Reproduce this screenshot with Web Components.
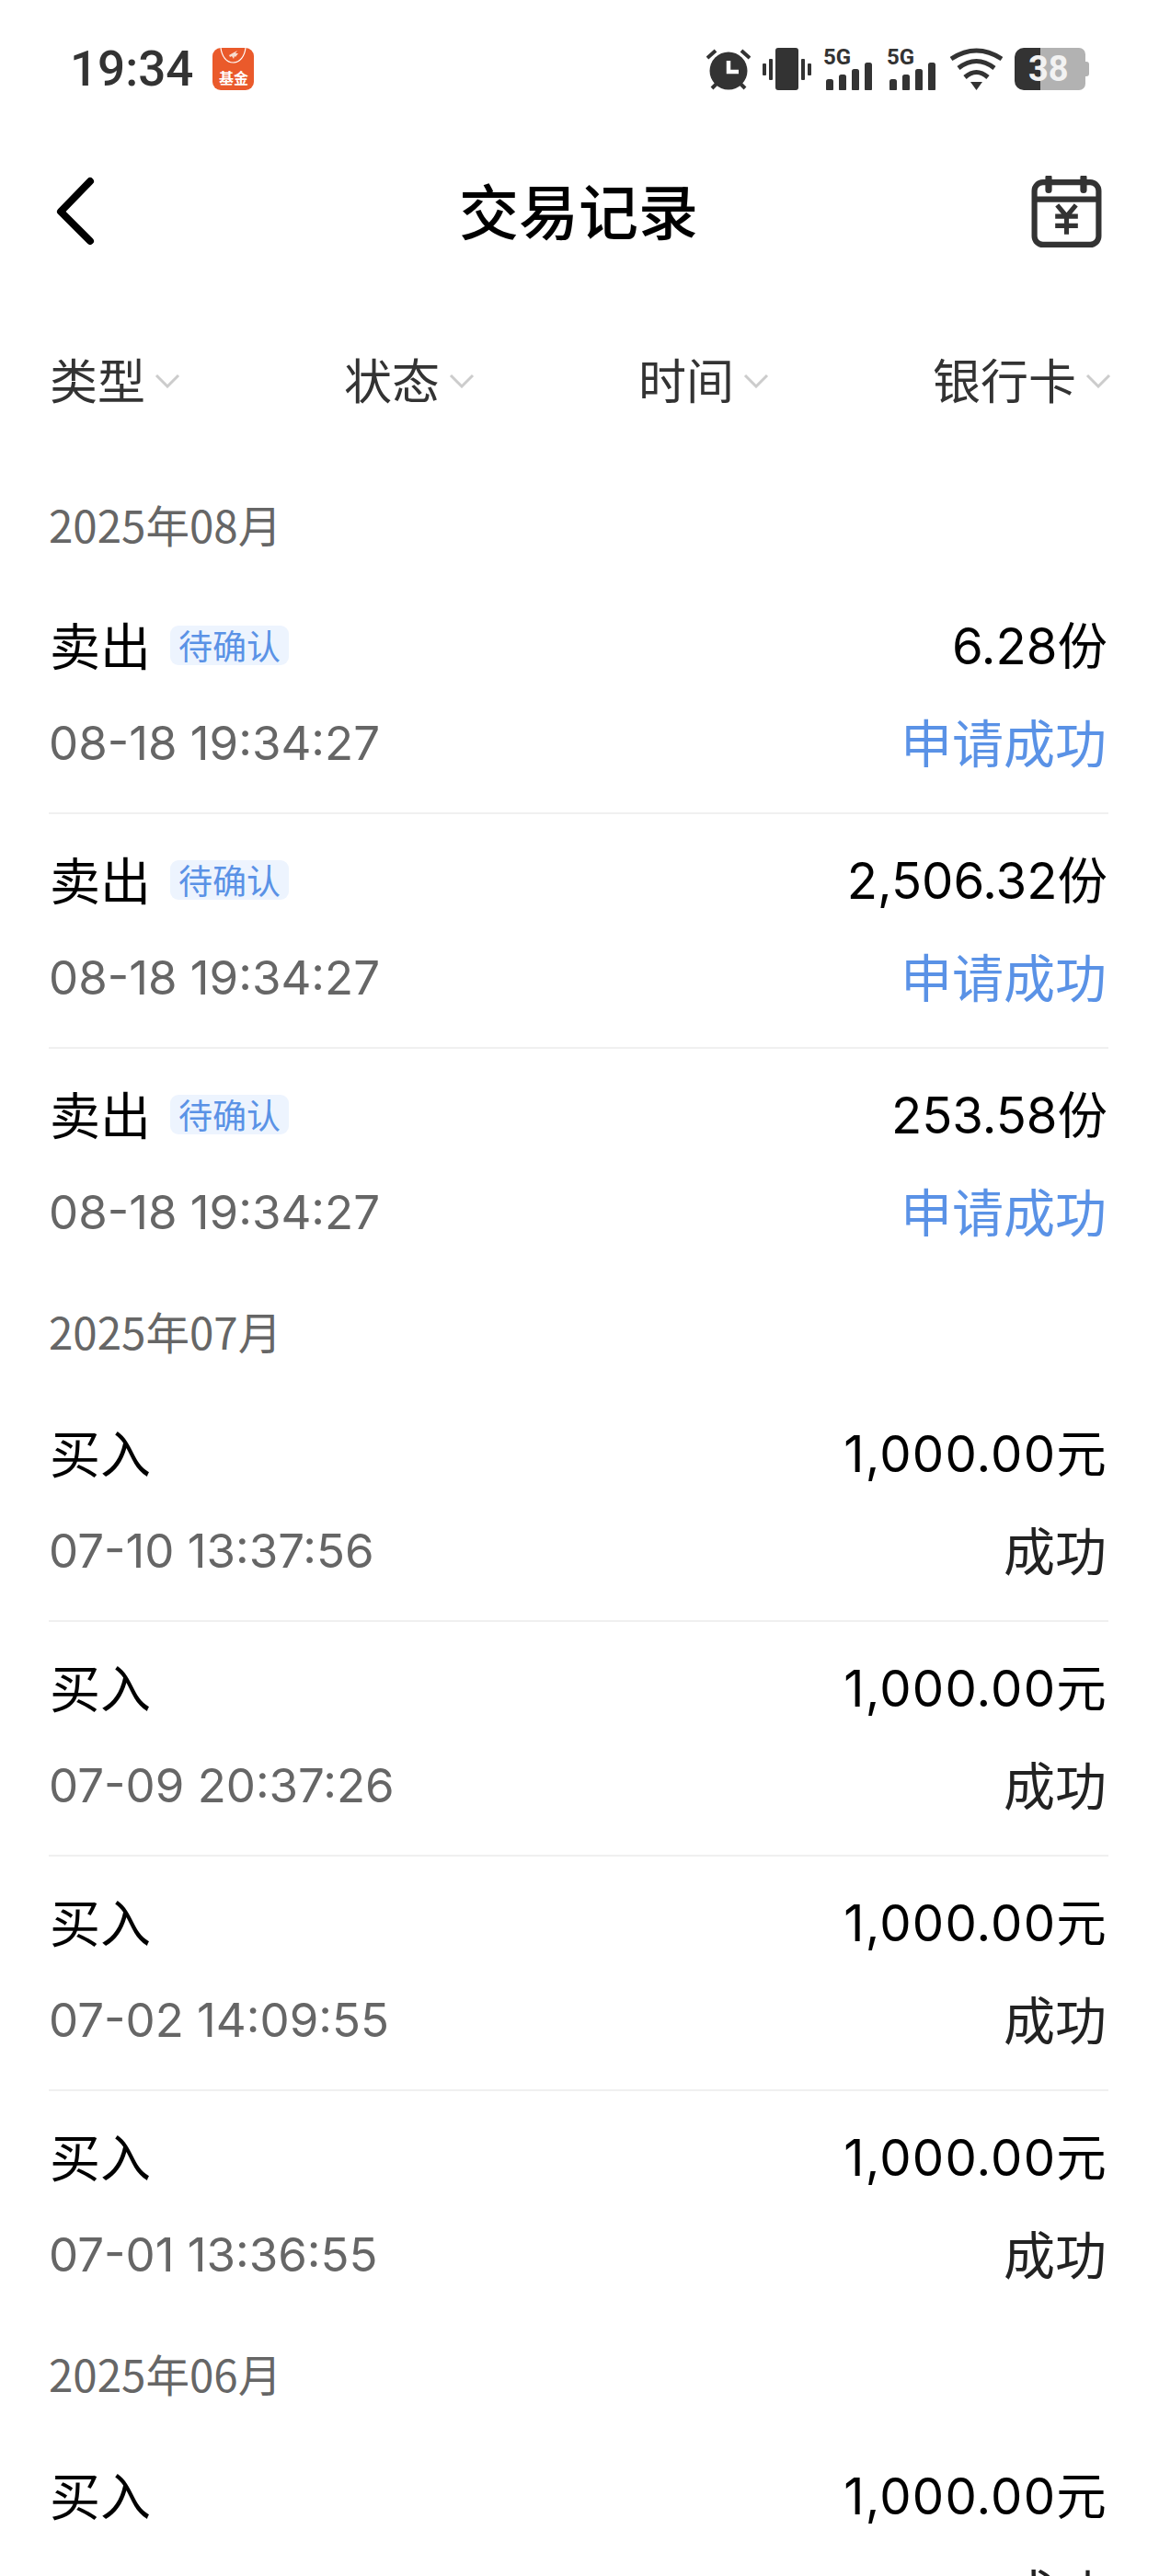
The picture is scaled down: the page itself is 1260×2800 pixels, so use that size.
<!DOCTYPE html>
<html lang="zh">
<head>
<meta charset="utf-8">
<title>交易记录</title>
<style>
html,body{margin:0;padding:0;background:#fff;}
body{font-family:"Noto Sans CJK SC","Noto Sans",sans-serif;height:2800px;overflow:hidden;}
</style>
</head>
<body>
<trade-page></trade-page>
<script>
class StatusBar extends HTMLElement{
    constructor(){
        super();
        this.attachShadow({mode:'open'});
        this.shadowRoot.innerHTML=`
        <style>
        :host{display:flex;align-items:center;justify-content:space-between;height:150px;padding:0 76px 0 76px;box-sizing:border-box;color:#333;}
        .left{display:flex;align-items:center;gap:21px;}
        .time{font:500 53px/60px Roboto,sans-serif;}
        .app{width:45px;height:46px;border-radius:9px;background:#ea5a2b;position:relative;overflow:hidden;color:#fff;}
        .app span{position:absolute;left:0;right:0;bottom:5px;text-align:center;font:700 16px/18px "Noto Sans CJK SC",sans-serif;}
        .app svg{position:absolute;left:0;top:0;}
        .right{display:flex;align-items:center;height:46px;}
        .bat{position:relative;width:81px;height:46px;}
        .bat b{position:absolute;left:15px;top:0;font:700 38px/46px Roboto,sans-serif;color:#f2f2f2;}
        svg{display:block;}
        </style>
        <div class="left">
            <div class="time">19:34</div>
            <div class="app">
                <svg width="45" height="46" viewBox="0 0 45 46" fill="none"><path d="M9 0c1 9 6 16 13.500 16S35 9 36 0" stroke="#fff" stroke-width="1.200"/><path d="M18 8l9-5-2 3 3 0-3 4-1-1-1 3-2-3-2 1z" fill="#f7ddd0"/></svg>
                <span>基金</span>
            </div>
        </div>
        <div class="right">
            <svg width="48" height="46" viewBox="0 0 48 46" style="margin-right:13px"><circle cx="24" cy="25" r="20.500" fill="#333"/><path d="M24 14v12h11" fill="none" stroke="#fff" stroke-width="4.500"/><path d="M1 11l9-8M47 11l-9-8M6 44l5-5M42 44l-5-5" stroke="#333" stroke-width="4" fill="none"/></svg>
            <svg width="53" height="46" viewBox="0 0 53 46" fill="#333" style="margin-right:13px"><rect x="14" y="0" width="25" height="46" rx="3"/><rect x="0" y="17" width="4" height="13" rx="1"/><rect x="7" y="12" width="4" height="23" rx="1"/><rect x="42" y="12" width="4" height="23" rx="1"/><rect x="49" y="17" width="4" height="13" rx="1"/></svg>
            <signal-icon style="margin-right:15px"></signal-icon>
            <signal-icon style="margin-right:15px"></signal-icon>
            <svg width="57" height="46" viewBox="0 0 57 46" style="margin-right:13px" fill="none" stroke="#333" stroke-width="5"><path d="M1 12Q28.500-6 56 12"/><path d="M9 22Q28.500 7 48 22"/><path d="M16 32Q28.500 21 41 32"/><path d="M22 37h13L28.500 46z" fill="#333" stroke="none"/></svg>
            <div class="bat">
                <svg width="81" height="46" viewBox="0 0 81 46"><path d="M28 0h42a7 7 0 0 1 7 7v32a7 7 0 0 1-7 7H28z" fill="#b2b2b2"/><path d="M28 0H10A10 10 0 0 0 0 10v26a10 10 0 0 0 10 10h18z" fill="#333"/><path d="M77 15h1a3 3 0 0 1 3 3v10a3 3 0 0 1-3 3h-1z" fill="#b2b2b2"/></svg>
                <b>38</b>
            </div>
        </div>`;
    }
}
customElements.define('status-bar',StatusBar);

class SignalIcon extends HTMLElement{
    constructor(){
        super();
        this.attachShadow({mode:'open'});
        this.shadowRoot.innerHTML=`
        <style>
        :host{display:block;position:relative;width:54px;height:46px;}
        span{position:absolute;left:0;top:-3px;font:700 24px/26px Roboto,sans-serif;color:#333;}
        svg{display:block;}
        </style>
        <span>5G</span>
        <svg width="54" height="46" viewBox="0 0 54 46" fill="#333"><rect x="3" y="34" width="8" height="13" rx="2.500"/><rect x="17" y="29" width="8" height="18" rx="2.500"/><rect x="31" y="23" width="8" height="24" rx="2.500"/><rect x="45" y="16" width="8" height="31" rx="2.500"/></svg>`;
    }
}
customElements.define('signal-icon',SignalIcon);

class NavHeader extends HTMLElement{
    constructor(){
        super();
        this.attachShadow({mode:'open'});
        this.shadowRoot.innerHTML=`
        <style>
        :host{display:grid;grid-template-columns:1fr auto 1fr;align-items:center;height:160px;padding:0 62px 0 60px;box-sizing:border-box;}
        h1{margin:0 0 6px;font:500 65px/80px "Noto Sans CJK SC",sans-serif;color:#000;}
        svg{display:block;}
        .cal{justify-self:end;}
        </style>
        <svg width="44" height="78" viewBox="0 0 44 78" fill="none" stroke="#000" stroke-width="8" stroke-linecap="round" stroke-linejoin="round"><path d="M38 6L6 39l32 32"/></svg>
        <h1>交易记录</h1>
        <svg class="cal" width="77" height="78" viewBox="0 0 74 76" fill="none" stroke="#333" stroke-width="6"><rect x="3" y="7" width="68" height="66" rx="9"/><path d="M3 25h68"/><path d="M18 2v13M55 2v13" stroke-width="7" stroke-linecap="round"/><path d="M27 31l10 12 10-12M25 43h24M25 53h24M37 43v19" stroke-width="5"/></svg>`;
    }
}
customElements.define('nav-header',NavHeader);

class FilterBar extends HTMLElement{
    constructor(){
        super();
        this.attachShadow({mode:'open'});
        this.shadowRoot.innerHTML=`
        <style>
        :host{display:flex;justify-content:space-between;align-items:center;height:208px;padding:0 52px 4px 54px;box-sizing:border-box;font:400 52px/70px "Noto Sans CJK SC",sans-serif;color:#333;}
        div{display:flex;align-items:center;gap:10px;}
        svg{display:block;margin-top:3px;}
        </style>
        ${['类型','状态','时间','银行卡'].map(t=>`<div><span>${t}</span><svg width="28" height="16" viewBox="0 0 28 16" fill="none" stroke="#ccc" stroke-width="3"><path d="M2 2l12 12L26 2"/></svg></div>`).join('')}`;
    }
}
customElements.define('filter-bar',FilterBar);

class MonthTitle extends HTMLElement{
    constructor(){
        super();
        this.attachShadow({mode:'open'});
        this.shadowRoot.innerHTML=`
        <style>
        :host{display:flex;align-items:center;box-sizing:border-box;padding-bottom:9px;height:var(--h,113px);font:400 47.500px/60px "Noto Sans CJK SC",sans-serif;color:#666;}
        </style>
        <slot></slot>`;
    }
}
customElements.define('month-title',MonthTitle);

class TradeRow extends HTMLElement{
    constructor(){
        super();
        this.attachShadow({mode:'open'});
        const tag=this.getAttribute('tag');
        const blue=this.getAttribute('state')=='申请成功';
        const time=this.getAttribute('time');
        this.shadowRoot.innerHTML=`
        <style>
        :host{display:flex;flex-direction:column;gap:26px;height:255px;box-sizing:border-box;padding-top:32px;border-bottom:2px solid #f0f0f0;font-family:"Noto Sans CJK SC",sans-serif;}
        :host([last]){border-bottom:none;}
        .line{display:flex;justify-content:space-between;align-items:center;height:80px;flex:none;}
        .l{display:flex;align-items:center;gap:21px;}
        .type{font-size:55px;line-height:80px;color:#000;margin:0 0 6px 1px;}
        .amt{font:400 54.500px/80px Inter,"Noto Sans CJK SC",sans-serif;color:#000;margin-right:1px;letter-spacing:${tag?'0':'1.2px'};}
        .tag{font-size:37px;line-height:43px;height:43px;padding:0 9px;border-radius:9px;background:#edf4fe;color:#5a92e6;margin-bottom:2px;}
        .time{font:400 51px/80px Inter,"Noto Sans CJK SC",sans-serif;color:#666;}
        .state{font-size:56px;line-height:80px;margin:0 2px 6px 0;color:${blue?'#5a92e6':'#222'};}
        </style>
        <div class="line">
            <div class="l"><span class="type">${this.getAttribute('type')}</span>${tag?`<span class="tag">${tag}</span>`:''}</div>
            <span class="amt">${this.getAttribute('amount')}</span>
        </div>
        <div class="line">
            ${time?`<span class="time">${time}</span>`:'<span></span>'}
            <span class="state">${this.getAttribute('state')}</span>
        </div>`;
    }
}
customElements.define('trade-row',TradeRow);

class TradePage extends HTMLElement{
    constructor(){
        super();
        this.attachShadow({mode:'open'});
        const sell=(a,last)=>`<trade-row type="卖出" tag="待确认" amount="${a}" time="08-18 19:34:27" state="申请成功" ${last?'last':''}></trade-row>`;
        const buy=(t,last)=>`<trade-row type="买入" amount="1,000.00元" time="${t}" state="成功" ${last?'last':''}></trade-row>`;
        this.shadowRoot.innerHTML=`
        <style>
        :host{display:block;height:2800px;overflow:hidden;background:#fff;}
        main{padding:0 55px 0 53px;}
        </style>
        <status-bar></status-bar>
        <nav-header></nav-header>
        <filter-bar></filter-bar>
        <main>
            <month-title style="--h:112px">2025年08月</month-title>
            ${sell('6.28份')}${sell('2,506.32份')}${sell('253.58份',true)}
            <month-title>2025年07月</month-title>
            ${buy('07-10 13:37:56')}${buy('07-09 20:37:26')}${buy('07-02 14:09:55')}${buy('07-01 13:36:55',true)}
            <month-title>2025年06月</month-title>
            ${buy('',true)}
        </main>`;
    }
}
customElements.define('trade-page',TradePage);
</script>
</body>
</html>
